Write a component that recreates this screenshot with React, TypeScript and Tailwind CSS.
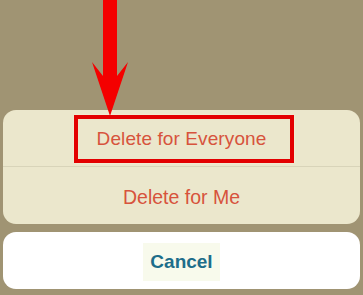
const Arrow = () => (
  <svg
    className="absolute left-0 top-0"
    width="140"
    height="120"
    viewBox="0 0 140 120"
  >
    <polygon
      points="103,0 117,0 117,76 128,62 110,116 92,62 103,76"
      fill="#f40000"
    />
  </svg>
);

export default function App() {
  return (
    <div
      className="relative w-[363px] h-[295px] overflow-hidden bg-[#a09473] flex flex-col px-[3px] pt-[110px]"
      style={{ fontFamily: '"Liberation Sans", Arial, sans-serif' }}
    >
      {/* Action sheet */}
      <div className="rounded-[13px] bg-[#ebe7cc] flex flex-col">
        <div className="relative h-[57px] pt-[3px] flex items-center justify-center border-b border-[#d8d4b9]">
          <span className="text-[19px] text-[#d7533c] tracking-[0.1px]">Delete for Everyone</span>
          {/* Highlight box */}
          <div className="absolute left-[71px] top-[5px] w-[220px] h-[48px] border-4 border-[#e30000] shadow-[0_0_2px_rgba(255,240,220,0.9)]" />
        </div>
        <div className="h-[57px] pt-[4px] flex items-center justify-center">
          <span className="text-[19.5px] text-[#d7533c]">Delete for Me</span>
        </div>
      </div>

      <div className="mt-[8px] h-[57px] pt-[3px] rounded-[13px] bg-white flex items-center justify-center">
        <span className="px-[7px] py-[5px] bg-[#f8faec] text-[19px] font-bold text-[#1d6d8a]">Cancel</span>
      </div>

      <Arrow />
    </div>
  );
}
